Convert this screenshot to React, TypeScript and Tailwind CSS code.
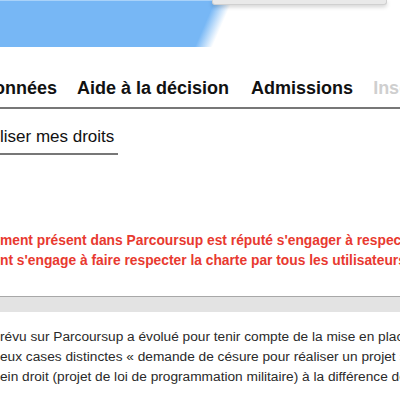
export default function App() {
  return (
    <div className="relative h-[400px] w-[400px] overflow-hidden bg-white font-['Liberation_Sans',Arial,sans-serif]">
      {/* bandeau bleu */}
      <div className="h-[1px] bg-[linear-gradient(113deg,#a9d2f9_214px,#ffffff_226px)]" />
      <div className="h-[46px] bg-[linear-gradient(113.5deg,#77b7f5_197px,#ffffff_213px)]" />

      {/* menu déroulant ouvert au-dessus */}
      <div className="absolute left-[212px] top-0 h-[5px] w-[175px] rounded-b-[3px] border border-t-0 border-[#d0d0d0] bg-[#e9e9e9] shadow-[0_2px_4px_rgba(0,0,0,0.18)]" />

      {/* navigation principale */}
      <nav className="flex items-center gap-[20px] whitespace-nowrap border-b-2 border-[#777] pb-[10px] pt-[32px] text-[18px] leading-[18px] font-bold text-[#111]">
        <span className="-ml-[6px]">onnées</span>
        <span>Aide à la décision</span>
        <span className="ml-[2px]">Admissions</span>
        <span className="text-[#cfcfcf]">Inscriptions</span>
      </nav>

      {/* onglet */}
      <div className="mt-[18px] w-[118px] whitespace-nowrap border-b-2 border-[#777] pb-[6px] text-[17px] leading-[20px] text-[#111]">
        liser mes droits
      </div>

      {/* avertissement */}
      <div className="mt-[76px] whitespace-nowrap text-[13.8px] leading-[20px] font-bold text-[#e8392f]">
        <p>ment présent dans Parcoursup est réputé s'engager à respecter la charte</p>
        <p>nt s'engage à faire respecter la charte par tous les utilisateurs de son établissement</p>
      </div>

      {/* barre grise */}
      <div className="mt-[25px] h-[16px] border-t border-[#a8a8a8] bg-[#e3e3e3]" />

      {/* texte */}
      <div className="mt-[15px] whitespace-nowrap text-[13.7px] leading-[20px] text-[#2a2a2a]">
        <p>révu sur Parcoursup a évolué pour tenir compte de la mise en place</p>
        <p>eux cases distinctes « demande de césure pour réaliser un projet »</p>
        <p>ein droit (projet de loi de programmation militaire) à la différence de</p>
      </div>
    </div>
  )
}
